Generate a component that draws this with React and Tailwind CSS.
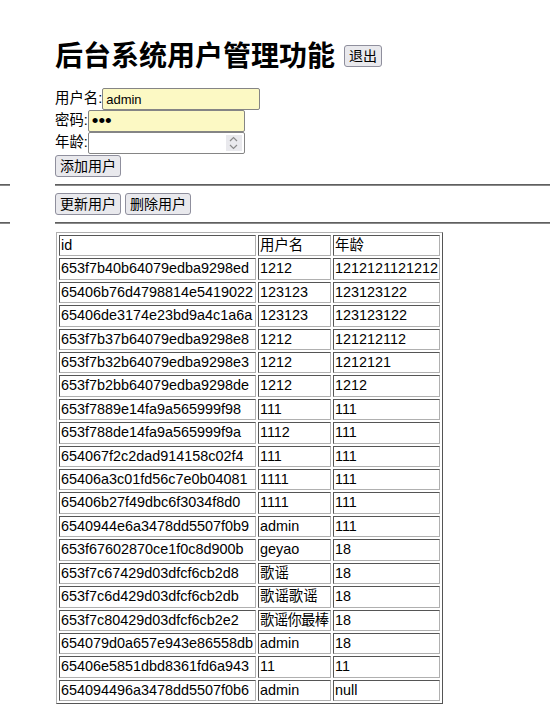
import React from "react";

const rows = [
  ["653f7b40b64079edba9298ed", "1212", "1212121121212"],
  ["65406b76d4798814e5419022", "123123", "123123122"],
  ["65406de3174e23bd9a4c1a6a", "123123", "123123122"],
  ["653f7b37b64079edba9298e8", "1212", "121212112"],
  ["653f7b32b64079edba9298e3", "1212", "1212121"],
  ["653f7b2bb64079edba9298de", "1212", "1212"],
  ["653f7889e14fa9a565999f98", "111", "111"],
  ["653f788de14fa9a565999f9a", "1112", "111"],
  ["654067f2c2dad914158c02f4", "111", "111"],
  ["65406a3c01fd56c7e0b04081", "1111", "111"],
  ["65406b27f49dbc6f3034f8d0", "1111", "111"],
  ["6540944e6a3478dd5507f0b9", "admin", "111"],
  ["653f67602870ce1f0c8d900b", "geyao", "18"],
  ["653f7c67429d03dfcf6cb2d8", "歌谣", "18"],
  ["653f7c6d429d03dfcf6cb2db", "歌谣歌谣", "18"],
  ["653f7c80429d03dfcf6cb2e2", "歌谣你最棒", "18"],
  ["654079d0a657e943e86558db", "admin", "18"],
  ["65406e5851dbd8361fd6a943", "11", "11"],
  ["654094496a3478dd5507f0b6", "admin", "null"],
];

const font = { fontFamily: '"Liberation Sans", Arial, "Noto Sans CJK SC", sans-serif' };

function Btn({ children, className = "" }) {
  return (
    <button
      className={
        "h-[22px] px-[4px] bg-[#e9e9ed] border border-[#8f8f9d] rounded-[3px] text-[14px] leading-[18px] text-black " +
        className
      }
    >
      {children}
    </button>
  );
}

function Hr() {
  return (
    <div className="flex items-start">
      <div className="w-[10px] h-[2px] border-t border-b border-t-[#5f5f5f] border-b-[#8a8a8a]" />
      <div className="w-[45px]" />
      <div className="flex-1 h-[2px] border-t border-b border-t-[#5f5f5f] border-b-[#8a8a8a]" />
    </div>
  );
}

const td = "border border-t-[#555] border-l-[#555] border-b-[#b0b0b0] border-r-[#b0b0b0] px-[1px] py-[1px] text-left font-normal whitespace-nowrap overflow-hidden align-middle";
const tdTight = td + " tracking-[-0.7px]";

export default function App() {
  return (
    <div className="w-[550px] h-[717px] bg-white text-black overflow-hidden" style={font}>
      <div className="pt-[34px]">
        <div className="pl-[55px] flex items-center h-[40px]">
          <h1 className="text-[28px] font-bold leading-[40px]" style={{ fontFamily: '"Noto Sans CJK SC", sans-serif' }}>
            后台系统用户管理功能
          </h1>
          <Btn className="ml-[9px] mt-[4px] w-[38px] px-0">退出</Btn>
        </div>
        <div className="pl-[55px] mt-[14px] text-[14.4px]">
          <div className="flex items-center h-[22px]">
            <span>用户名:</span>
            <input
              readOnly
              value="admin"
              className="w-[158px] h-[22px] border border-[#858585] rounded-[2px] bg-[#fcf9c4] px-[3px] text-[13px] outline-none"
            />
          </div>
          <div className="flex items-center h-[22px]">
            <span>密码:</span>
            <input
              readOnly
              type="password"
              value="123"
              className="w-[157px] h-[22px] border border-[#858585] rounded-[2px] bg-[#fcf9c4] px-[3px] text-[19px] leading-[20px] outline-none"
            />
          </div>
          <div className="flex items-center h-[22px]">
            <span>年龄:</span>
            <div className="relative w-[157px] h-[22px] border border-[#858585] rounded-[2px] bg-white">
              <div className="absolute right-[2px] top-[2px] w-[16px] h-[16px] bg-[#e9e9ed] flex items-center justify-center">
                <svg width="9" height="14" viewBox="0 0 9 14" fill="none" stroke="#8a8a8a" strokeWidth="1.2">
                  <path d="M1 5 L4.5 1.5 L8 5" />
                  <path d="M1 9 L4.5 12.5 L8 9" />
                </svg>
              </div>
            </div>
          </div>
          <div className="h-[23px] flex items-center">
            <Btn>添加用户</Btn>
          </div>
        </div>
        <div className="mt-[7px]">
          <Hr />
        </div>
        <div className="pl-[55px] mt-[7px] flex gap-[4px]">
          <Btn>更新用户</Btn>
          <Btn>删除用户</Btn>
        </div>
        <div className="mt-[7px]">
          <Hr />
        </div>
        <div className="pl-[56px] mt-[8px]">
          <table
            className="table-fixed w-[387px] border-separate border border-t-[#b0b0b0] border-l-[#b0b0b0] border-b-[#555] border-r-[#555] text-[14.4px] leading-[17.4px]"
            style={{ borderSpacing: "2px" }}
          >
            <thead>
              <tr>
                <th className={td + " w-[197px]"}>id</th>
                <th className={td + " w-[73px]"}>用户名</th>
                <th className={td + " w-[107px]"}>年龄</th>
              </tr>
            </thead>
            <tbody>
              {rows.map((r) => (
                <tr key={r[0]}>
                  <td className={td}>{r[0]}</td>
                  <td className={r[1].length === 5 && /[^\x00-\x7f]/.test(r[1]) ? tdTight : td}>{r[1]}</td>
                  <td className={td}>{r[2]}</td>
                </tr>
              ))}
            </tbody>
          </table>
        </div>
      </div>
    </div>
  );
}
